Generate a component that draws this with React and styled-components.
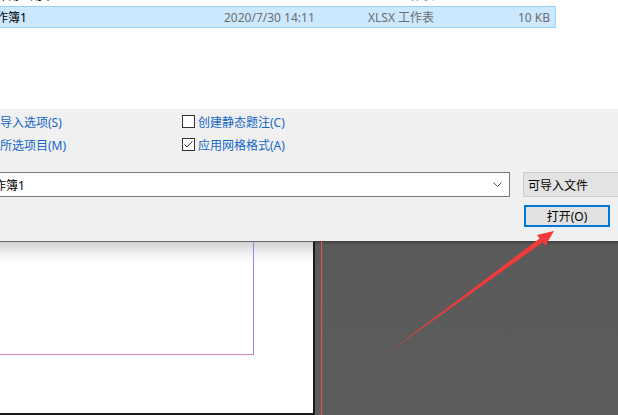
import React from "react";
import styled, { createGlobalStyle } from "styled-components";

const GlobalStyle = createGlobalStyle`
  body {
    margin: 0;
    background: #fff;
    font-family: "Noto Sans", "Noto Sans CJK SC", sans-serif;
    font-size: 12px;
  }
`;

const Screen = styled.div`
  position: relative;
  width: 618px;
  height: 415px;
  overflow: hidden;
  display: flex;
  flex-direction: column;
`;

const FileList = styled.div`
  height: 109px;
  background: #fff;
  overflow: hidden;
`;

const Rows = styled.div`
  margin-top: -16px;
`;

const FileRow = styled.div`
  display: flex;
  align-items: center;
  box-sizing: border-box;
  height: 22px;
  width: 575px;
  margin-left: -19px;
  padding: 0 5px 0 2px;
  background: ${(p) => (p.selected ? "#cce8ff" : "transparent")};
  border: 1px solid ${(p) => (p.selected ? "#99d1ff" : "transparent")};
  white-space: nowrap;
`;

const NameCell = styled.span`
  width: 240px;
  color: #000;
`;

const DateCell = styled.span`
  width: 144px;
  color: #6d6d6d;
`;

const TypeCell = styled.span`
  flex: 1;
  color: #6d6d6d;
`;

const SizeCell = styled.span`
  color: #6d6d6d;
`;

const Dialog = styled.div`
  height: 132px;
  background: #f0f0f0;
  box-sizing: border-box;
  padding-top: 1px;
  display: flex;
  flex-direction: column;
`;

const Options = styled.div`
  display: grid;
  grid-template-columns: 206px auto;
  grid-auto-rows: 23px;
  margin-left: -24px;
`;

const Option = styled.label`
  display: flex;
  align-items: center;
  color: #1466c8;
  white-space: nowrap;
`;

const Box = styled.span`
  box-sizing: border-box;
  width: 13px;
  height: 13px;
  margin-right: 3px;
  border: 1px solid #333;
  background: #fff;
  display: flex;
  align-items: center;
  justify-content: center;
`;

const ComboRow = styled.div`
  display: flex;
  margin-top: 16px;
  height: 25px;
`;

const Combo = styled.div`
  box-sizing: border-box;
  width: 530px;
  margin-left: -20px;
  padding: 0 7px 0 1px;
  border: 1px solid #7a7a7a;
  background: #fff;
  display: flex;
  align-items: center;
  justify-content: space-between;
  color: #000;
`;

const Filter = styled.div`
  box-sizing: border-box;
  flex: 1;
  margin-left: 13px;
  margin-right: -20px;
  padding-left: 4px;
  border: 1px solid #cccccc;
  background: #e3e3e3;
  display: flex;
  align-items: center;
  color: #000;
`;

const ButtonRow = styled.div`
  display: flex;
  margin-top: 8px;
  padding-left: 524px;
`;

const Button = styled.button`
  box-sizing: border-box;
  width: 86px;
  height: 22px;
  border: 2px solid #0078d7;
  background: #e1e1e1;
  font: inherit;
  color: #000;
  padding: 0;
`;

const Workspace = styled.div`
  flex: 1;
  display: flex;
`;

const Page = styled.div`
  box-sizing: border-box;
  width: 315px;
  border-right: 2px solid #1b1b1b;
  border-bottom: 2px solid #1b1b1b;
  border-top: 1px solid #6a6a6a;
  background: linear-gradient(#d2d2d2, #f6f6f6 14px, #fff 22px);
`;

const MarginGuide = styled.div`
  box-sizing: border-box;
  width: 254px;
  height: 113px;
  border-right: 1px solid #8c8cf5;
  border-bottom: 1px solid #d682bd;
`;

const Pasteboard = styled.div`
  flex: 1;
  display: flex;
  background: linear-gradient(#3f3f3f, #5a5a5a 4px, #5c5c5c);
`;

const BleedGuide = styled.div`
  width: 1px;
  margin-left: 6px;
  background: #e8505d;
`;

const Arrow = styled.svg`
  position: absolute;
  left: 0;
  top: 0;
  pointer-events: none;
`;

const Check = () => (
  <svg width="11" height="11" viewBox="0 0 11 11">
    <path d="M1.5 5.5 L4 8 L9.5 2.5" fill="none" stroke="#333" strokeWidth="1" />
  </svg>
);

const CheckOption = ({ checked, children }) => (
  <Option>
    <Box>{checked && <Check />}</Box>
    {children}
  </Option>
);

export default function App() {
  return (
    <>
      <GlobalStyle />
      <Screen>
        <FileList>
          <Rows>
            <FileRow>
              <NameCell>工作簿2 副本</NameCell>
              <DateCell>2020/7/30 14:09</DateCell>
              <TypeCell>XLSX 工作表</TypeCell>
              <SizeCell>9 KB</SizeCell>
            </FileRow>
            <FileRow selected>
              <NameCell>工作簿1</NameCell>
              <DateCell>2020/7/30 14:11</DateCell>
              <TypeCell>XLSX 工作表</TypeCell>
              <SizeCell>10 KB</SizeCell>
            </FileRow>
          </Rows>
        </FileList>
        <Dialog>
          <Options>
            <Option>显示导入选项(S)</Option>
            <CheckOption>创建静态题注(C)</CheckOption>
            <Option>替换所选项目(M)</Option>
            <CheckOption checked>应用网格格式(A)</CheckOption>
          </Options>
          <ComboRow>
            <Combo>
              <span>工作簿1</span>
              <svg width="9" height="5" viewBox="0 0 9 5">
                <path d="M0.5 0.5 L4.5 4.5 L8.5 0.5" fill="none" stroke="#555" strokeWidth="1" />
              </svg>
            </Combo>
            <Filter>可导入文件</Filter>
          </ComboRow>
          <ButtonRow>
            <Button>打开(O)</Button>
          </ButtonRow>
        </Dialog>
        <Workspace>
          <Page>
            <MarginGuide />
          </Page>
          <Pasteboard>
            <BleedGuide />
          </Pasteboard>
        </Workspace>
        <Arrow width="618" height="415" viewBox="0 0 618 415">
          <polygon
            points="389,352 539.6,238.5 537,234.9 554,231 545.2,246.1 542.6,242.5"
            fill="#f23a3a"
          />
        </Arrow>
      </Screen>
    </>
  );
}
